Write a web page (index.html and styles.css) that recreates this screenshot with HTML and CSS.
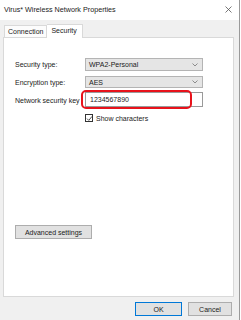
FILE: index.html
```html
<!DOCTYPE html>
<html lang="en">
  <head>
    <meta charset="UTF-8" />
    <title>Virus* Wireless Network Properties</title>
    <link rel="stylesheet" href="styles.css">
  </head>
  <body>
    <div class="window">
      <div class="titlebar">
        <span class="title">Virus* Wireless Network Properties</span>
        <svg class="close" width="7" height="7" viewBox="0 0 7 7">
          <path d="M0.5 0.5 L6.5 6.5 M6.5 0.5 L0.5 6.5" stroke="#555" stroke-width="0.8" fill="none" />
        </svg>
      </div>

      <div class="tabs">
        <div class="tab">Connection</div>
        <div class="tab active">Security</div>
      </div>

      <div class="panel">
        <div class="form">
          <label class="row-label">Security type:</label>
          <div class="dropdown row-a">
            <span>WPA2-Personal</span>
            <svg width="6" height="4" viewBox="0 0 6 4">
              <path d="M0.5 0.5 L3 3 L5.5 0.5" stroke="#666" stroke-width="0.7" fill="none" />
            </svg>
          </div>

          <label class="row-label">Encryption type:</label>
          <div class="dropdown row-b">
            <span>AES</span>
            <svg width="6" height="4" viewBox="0 0 6 4">
              <path d="M0.5 0.5 L3 3 L5.5 0.5" stroke="#666" stroke-width="0.7" fill="none" />
            </svg>
          </div>

          <label class="row-label">Network security key</label>
          <div class="keybox">
            <span>1234567890</span>
            <div class="highlight"></div>
          </div>

          <div></div>
          <div class="check-row">
            <span class="checkbox">
              <svg width="7" height="7" viewBox="0 0 7 7">
                <path d="M1 3.6 L2.8 5.4 L6 1.4" stroke="#222" stroke-width="0.8" fill="none" />
              </svg>
            </span>
            <span>Show characters</span>
          </div>
        </div>

        <button class="btn advanced">Advanced settings</button>
      </div>

      <div class="footer">
        <button class="btn ok">OK</button>
        <button class="btn">Cancel</button>
      </div>
    </div>
  </body>
</html>
```

FILE: styles.css
```css
body {
  margin: 0;
  font-family: "Liberation Sans", Arial, sans-serif;
  font-size: 7px;
  color: #1a1a1a;
  background: #fff;
}

.window {
  width: 239px;
  height: 320px;
  border-right: 1px solid #9a9a9a;
  background-color: #f0f0f0;
  display: flex;
  flex-direction: column;
}

.titlebar {
  height: 20px;
  background-color: #fff;
  display: flex;
  align-items: center;
  justify-content: space-between;
  padding: 0 7px 2px 4px;
  box-sizing: border-box;
}

.title {
  font-size: 7.2px;
  color: #222;
}

.tabs {
  display: flex;
  padding: 4px 0 0 4px;
  height: 17px;
  box-sizing: border-box;
  align-items: flex-end;
}

.tab {
  height: 11px;
  padding: 0 3px;
  display: flex;
  align-items: center;
  border: 1px solid #d9d9d9;
  border-bottom: none;
  background-color: #fcfcfc;
  color: #222;
}

.tab.active {
  height: 14px;
  padding: 0 5px 2px 4px;
  align-items: center;
  background-color: #fff;
  border-left: none;
  position: relative;
  top: 1px;
  box-sizing: border-box;
}

.panel {
  margin: 0 5px 0 3px;
  height: 260px;
  background-color: #fff;
  border: 1px solid #d9d9d9;
  box-sizing: border-box;
  padding: 20px 0 0 11px;
}

.form {
  display: grid;
  grid-template-columns: 70px 118px;
  row-gap: 5px;
  align-items: center;
}

.row-label {
  color: #222;
}

.dropdown {
  height: 13px;
  box-sizing: border-box;
  border: 1px solid #b4b4b4;
  background-color: #e5e5e5;
  display: flex;
  align-items: center;
  justify-content: space-between;
  padding: 0 4px 0 3px;
}

.row-b {
  height: 12px;
}

.keybox {
  height: 15px;
  box-sizing: border-box;
  border: 1px solid #9a9a9a;
  background-color: #fff;
  display: flex;
  align-items: center;
  padding-left: 4px;
  position: relative;
  margin-top: -1px;
}

/* red annotation drawn over the key field */
.highlight {
  position: absolute;
  left: -5px;
  top: -3px;
  width: 111px;
  height: 19px;
  border: 2px solid #e8121b;
  border-radius: 5px;
  box-sizing: border-box;
}

.check-row {
  display: flex;
  align-items: center;
  gap: 3px;
  margin-top: 2px;
}

.checkbox {
  width: 8px;
  height: 8px;
  border: 1px solid #333;
  box-sizing: border-box;
  display: flex;
  align-items: center;
  justify-content: center;
  background: #fff;
}

.checkbox svg {
  flex: none;
}

.btn {
  font-family: inherit;
  font-size: 7px;
  color: #222;
  background-color: #e1e1e1;
  border: 1px solid #adadad;
  height: 14px;
  padding: 0;
  box-sizing: border-box;
}

.advanced {
  display: block;
  width: 77px;
  margin-top: 103px;
}

.footer {
  display: flex;
  justify-content: flex-end;
  gap: 6px;
  padding: 5px 7px 0 0;
}

.footer .btn {
  width: 44px;
}

.footer .ok {
  width: 47px;
  border-color: #0078d7;
}
```
